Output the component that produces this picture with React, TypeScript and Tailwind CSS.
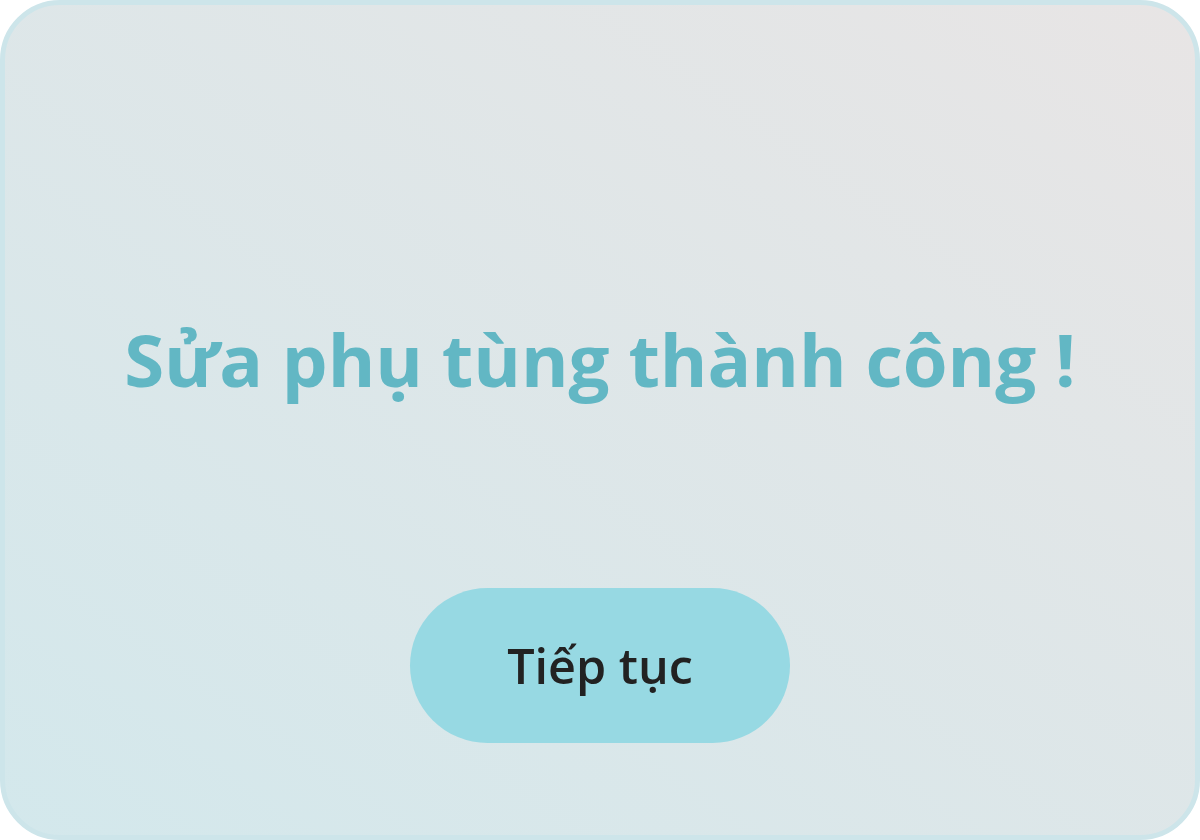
export default function App() {
  return (
    <div className="w-[1200px] h-[840px] bg-white" style={{ fontFamily: '"Open Sans", "Noto Sans", sans-serif' }}>
      <div className="w-full h-full rounded-[60px] border-[5px] border-[#cde5ea] bg-gradient-to-tr from-[#d3e8ec] to-[#e8e5e5] flex flex-col items-center">
        <div className="h-[580px] flex items-center justify-center pt-[128px]">
          <h1 className="text-[72.5px] font-bold text-[#62b7c4] leading-none tracking-[0px]">Sửa phụ tùng thành công !</h1>
        </div>
        <button className="w-[380px] h-[155px] mt-[3px] rounded-full bg-[#97d9e3] text-[48.5px] font-semibold text-[#222222] leading-none flex items-center justify-center">
          Tiếp tục
        </button>
      </div>
    </div>
  );
}
